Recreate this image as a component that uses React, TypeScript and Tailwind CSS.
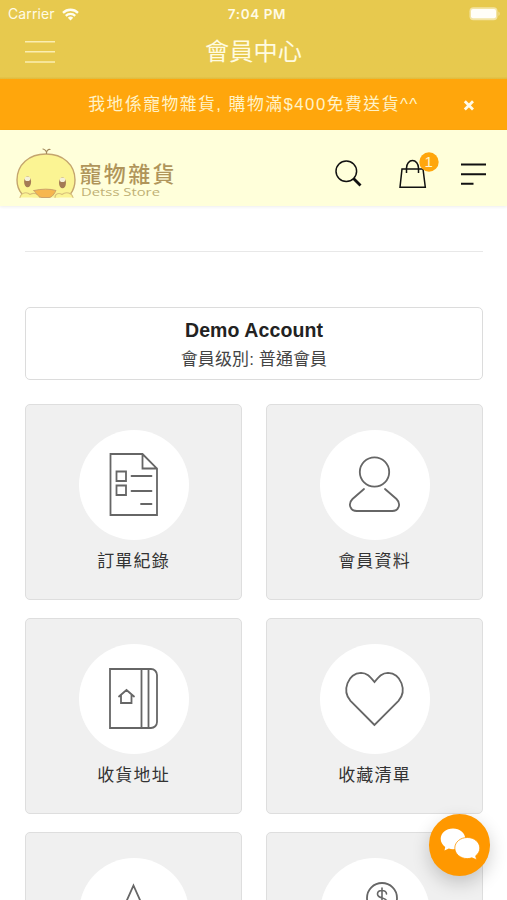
import type { ReactNode } from 'react';

const cjk = "font-['Liberation_Sans','Noto_Sans_CJK_TC',sans-serif]";

function StatusBar() {
  return (
    <div className="grid h-[28px] grid-cols-3 items-center pl-[8px] pr-[6px] font-['Inter',sans-serif] text-[#fffbe6]">
      <div className="flex items-center gap-[7px]">
        <span className="text-[14px] leading-none tracking-[0.1px]">Carrier</span>
        <svg width="17" height="13" viewBox="0 0 17 13" fill="none" stroke="#fffdf0" strokeWidth="2.3">
          <path d="M1 4.8a10.8 10.8 0 0 1 15 0" />
          <path d="M3.8 7.8a6.8 6.8 0 0 1 9.4 0" />
          <path d="M8.5 12.5 5.8 9.8a4 4 0 0 1 5.4 0z" fill="#fffdf0" stroke="none" />
        </svg>
      </div>
      <div className="whitespace-nowrap pl-[5px] pt-px text-center text-[13.5px] font-semibold leading-none tracking-[0.6px]">7:04 PM</div>
      <svg className="justify-self-end" width="33" height="16" viewBox="0 0 33 16">
        <rect x="1.5" y="1.2" width="28" height="13" rx="4" fill="#f3e4a4" />
        <rect x="3" y="2.900" width="25" height="9.400" rx="2" fill="#fffef8" />
        <path d="M30.500 5.500c1.5.8 1.500 3.700 0 4.500z" fill="#f3e4a4" />
      </svg>
    </div>
  );
}

function TitleBar() {
  return (
    <div className={`grid h-[51px] grid-cols-[60px_1fr_60px] ${cjk}`}>
      <svg width="60" height="51" viewBox="0 0 60 51" stroke="#fbeeb0" strokeWidth="1.5">
        <path d="M25 13.7h30M25 23.7h30M25 34h30" />
      </svg>
      <h1 className="text-center text-[24.2px] leading-[48px] text-[#fffbe0]">會員中心</h1>
    </div>
  );
}

function Banner() {
  return (
    <div className={`grid h-[51px] grid-cols-[75px_1fr_75px] items-center bg-[#ffa60c] text-[#fff3c8] ${cjk}`}>
      <p className="col-start-2 whitespace-nowrap text-center text-[16.8px] leading-[51px] tracking-[1.5px]">
        我地係寵物雜貨, 購物滿$400免費送貨^^
      </p>
      <svg className="ml-[31px]" width="12" height="12" viewBox="0 0 12 12" stroke="#fffbe8" strokeWidth="2.8">
        <path d="m1.8 2.2 8.2 8.2M10 2.2l-8.2 8.2" />
      </svg>
    </div>
  );
}

function Logo() {
  return (
    <svg width="170" height="60" viewBox="10 143 170 60" fill="none" strokeLinecap="round" strokeLinejoin="round">
      <path
        d="M22 195c-3.500-4-5-9-5-15 0-15.500 12-26 29-26s29 10.500 29 26c0 6-1.500 11-5 15l-12 2.500H34z"
        fill="#fbf493"
      />
      <path d="M22 194c-3.500-4-5-8.500-5-14 0-15.500 12-26 29-26s29 10.500 29 26c0 5.500-1.500 10-4.500 14" stroke="#c4a56e" strokeWidth="1.4" />
      <path d="M46.500 153.500c.5-2-1.500-4-3.500-4.500M46.500 153c0-2 1.500-4 3.500-3.500" stroke="#a38a5c" strokeWidth="1.2" />
      <path d="M20 197.500c1-5 7-6 10-3 4-2.500 9-.5 10 3M55 197.500c0-4 4-5 7-3 4-3.500 10-1.500 11 3" fill="#fbf493" stroke="#d8c07c" strokeWidth="1.1" />
      <path d="M34 190.500c8-1.800 16-1.800 22 0-1.500 3-4 7-7 7h-7c-3 0-6-4-8-7z" fill="#f6b64f" stroke="#cca26b" />
      <ellipse cx="27.600" cy="181.800" rx="3.500" ry="5.500" fill="#a47b55" />
      <ellipse cx="62.500" cy="182.800" rx="3.500" ry="5.500" fill="#a47b55" />
      <ellipse cx="27.500" cy="178.800" rx="2.800" ry="2.300" fill="#f5f1d8" />
      <ellipse cx="62.500" cy="179.800" rx="2.800" ry="2.300" fill="#f5f1d8" />
      <text x="79.500" y="181.500" textLength="95" className="font-['Noto_Sans_CJK_TC',sans-serif] text-[22px] font-medium" fill="#b0955a">
        寵物雜貨
      </text>
      <text x="81" y="196" textLength="79" lengthAdjust="spacingAndGlyphs" className="font-['Open_Sans',sans-serif] text-[11px]" fill="#c0b074">
        Detss Store
      </text>
    </svg>
  );
}

function ShopHeader() {
  return (
    <header className="flex h-[76px] items-start justify-between bg-[#ffffda] pl-[10px] pr-[17px] pt-[13px] shadow-[0_1px_3px_#00000012]">
      <Logo />
      <svg width="160" height="60" viewBox="330 143 160 60" fill="none" stroke="#111" strokeWidth="1.5">
        <circle cx="346.300" cy="171.300" r="10.300" />
        <path d="m353.500 178.500 7 7" strokeWidth="2.800" />
        <path d="M402 169h21l2.300 18.200h-25.300zM406.500 173v-5a6 7.500 0 0 1 12 0v5" />
        <path d="M461 164.500h25M461 174.300h25M461 183.700h12.500" strokeWidth="1.900" />
        <circle cx="429" cy="162" r="9.700" fill="#ffa60c" stroke="none" />
        <text x="428.700" y="167.400" textAnchor="middle" stroke="none" fill="#fff5d0" className="font-['Liberation_Sans',sans-serif] text-[15px]">
          1
        </text>
      </svg>
    </header>
  );
}

const orders = (
  <>
    <path d="M32 24.500h32L78.500 39v46.500H32zM64 24.500V39h14.500" />
    <path d="M38 42h9.500v9.500H38zM38 56h9.500v9.500H38zM53 46.500h20M53 61.500h20M62.500 74.500H73" />
  </>
);
const profile = (
  <>
    <circle cx="55" cy="42.500" r="14.700" />
    <path d="M44.500 59.500 33 69.500c-4.800 4.800-2.500 12 4.200 12h35.600c6.700 0 9-7.200 4.200-12L65.500 59.500" />
  </>
);
const address = (
  <>
    <path d="M31.500 25.500h41a6 6 0 0 1 6 6v47a6 6 0 0 1-6 6h-41zM63 25.500v59M70 25.500v59" />
    <path d="m40.500 53 7.500-6.500 7.500 6.500M42.500 51.500V59.500h10.500v-8" />
  </>
);
const wishlist = <path d="M55 81.500 31 57.300c-9-10-2.500-27.500 10.500-28 6 0 9 3.800 13.500 9.200 4.500-5.400 7.500-9.200 13.500-9.200 13 .5 19.500 18 10.500 28z" />;
const award = <path d="m55 28 8.500 19 20 2-15 14 4 21L55 73 37.500 84l4-21-15-14 20-2z" />;
const credit = (
  <>
    <circle cx="62.500" cy="40.500" r="15" />
    <path d="M67 36.500c0-2-2-3.500-4.500-3.500S58 34.300 58 36.500c0 5.500 9.500 2.500 9.500 8 0 2.500-2.500 4-5 4s-5-1.500-5-4M62.500 30.500v20" strokeWidth="1.600" />
  </>
);

function Card({ label, children }: { label?: string; children: ReactNode }) {
  return (
    <div className="flex h-[196px] flex-col items-center rounded-[5px] border border-[#dedede] bg-[#f0f0f0] pt-[25px]">
      <div className="h-[110px] w-[110px] shrink-0 rounded-full bg-white">
        <svg width="110" height="110" viewBox="0.500 0.500 110 110" fill="none" stroke="#666" strokeWidth="1.800" strokeLinecap="round">
          {children}
        </svg>
      </div>
      {label && <span className="mt-[9px] text-[17px] leading-[25px] tracking-[1.15px] text-[#333]">{label}</span>}
    </div>
  );
}

export default function App() {
  return (
    <div className="relative h-[900px] w-[507px] overflow-hidden bg-white">
      <div className="bg-linear-to-b from-[#e7c94e] from-97% to-[#e0b93a]">
        <StatusBar />
        <TitleBar />
      </div>
      <Banner />
      <ShopHeader />
      <main className={`pl-[25px] pr-[24px] pt-[45px] ${cjk}`}>
        <hr className="border-[#e8e8e8]" />
        <section className="mt-[55px] h-[73px] rounded-[5px] border-[1.5px] border-[#dcdcdc] pt-[9px] text-center">
          <h2 className="text-[19.5px] font-bold leading-[26px] tracking-[0.1px] text-[#222]">Demo Account</h2>
          <p className="pt-[2px] text-[17px] leading-[29px] tracking-[0.1px] text-[#444]">會員级別: 普通會員</p>
        </section>
        <section className="mt-[24px] grid grid-cols-2 gap-x-[24px] gap-y-[17.800px]">
          <Card label="訂單紀錄">{orders}</Card>
          <Card label="會員資料">{profile}</Card>
          <Card label="收貨地址">{address}</Card>
          <Card label="收藏清單">{wishlist}</Card>
          <Card>{award}</Card>
          <Card>{credit}</Card>
        </section>
      </main>
      <button className="absolute left-[429px] top-[814px] h-[62px] w-[61px] rounded-full bg-[#ff9800] shadow-[0_7px_18px_#00000030]">
        <svg width="61" height="62" viewBox="0 0 61 62" fill="#fff">
          <path d="M24 14.500c-7 0-12.300 4.600-12.300 10.300 0 3.400 1.700 6.200 4.500 8.100l-.7 3.600 4.300-1.900c1.300.4 2.700.6 4.200.6 6.800 0 12.300-4.600 12.300-10.400S30.800 14.500 24 14.500z" />
          <path
            d="M38.300 23.500c-7 0-12.500 4.700-12.500 10.500s5.500 10.600 12.500 10.600c1.700 0 3.200-.3 4.600-.8l4.600 2-.8-4c2.600-1.900 4.100-4.700 4.100-7.800 0-5.800-5.600-10.500-12.500-10.500z"
            stroke="#ff9800"
            strokeWidth=".8"
          />
        </svg>
      </button>
    </div>
  );
}
